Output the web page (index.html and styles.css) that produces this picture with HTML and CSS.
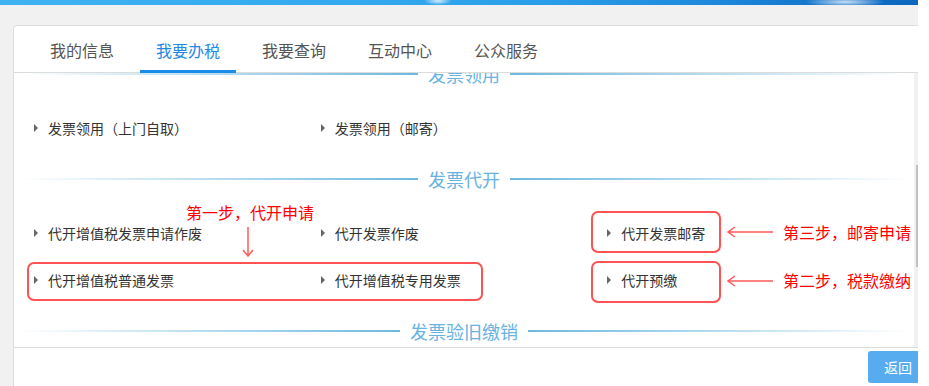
FILE: index.html
```html
<!DOCTYPE html>
<html lang="zh-CN">
<head>
    <meta charset="UTF-8">
    <meta name="viewport" content="width=device-width, initial-scale=1.0">
    <title>我要办税</title>
    <link rel="stylesheet" href="styles.css">
</head>
<body>
    <div class="page">
        <div class="banner"></div>
        <div class="card">
            <ul class="tabs">
                <li>我的信息</li>
                <li class="active">我要办税</li>
                <li>我要查询</li>
                <li>互动中心</li>
                <li>公众服务</li>
            </ul>
            <div class="scroll-row">
                <div class="scroll" id="scrollBox">
                    <div class="scroll-inner">
                        <section class="sec">
                            <h3 class="sec-title"><span>发票票种核定</span></h3>
                            <ul class="items">
                                <li>发票票种核定</li>
                                <li>增值税专用发票最高开票限额申请</li>
                                <li>发票增版增量</li>
                                <li>普通发票核定调整</li>
                                <li>税控设备初始发行</li>
                                <li>税控设备变更发行</li>
                                <li>印制有本单位名称发票</li>
                            </ul>
                        </section>
                        <section class="sec">
                            <h3 class="sec-title"><span>发票领用</span></h3>
                            <ul class="items">
                                <li>发票领用（上门自取）</li>
                                <li>发票领用（邮寄）</li>
                            </ul>
                        </section>
                        <section class="sec">
                            <h3 class="sec-title"><span>发票代开</span></h3>
                            <div class="items-wrap">
                                <ul class="items">
                                    <li>代开增值税发票申请作废</li>
                                    <li>代开发票作废</li>
                                    <li>代开发票邮寄</li>
                                    <li>代开增值税普通发票</li>
                                    <li>代开增值税专用发票</li>
                                    <li>代开预缴</li>
                                </ul>
                                <!-- annotations -->
                                <div class="mark mark-wide"></div>
                                <div class="mark mark-post"></div>
                                <div class="mark mark-pay"></div>
                                <span class="step step-one">第一步，代开申请</span>
                                <svg class="arrow arrow-down" width="12" height="30" viewBox="0 0 12 30">
                                    <path d="M6 0 V29 M1 23 L6 29 L11 23" fill="none" stroke="#ff5b5b" stroke-width="1.5"/>
                                </svg>
                                <svg class="arrow arrow-post" width="46" height="12" viewBox="0 0 46 12">
                                    <path d="M46 6 H1 M8 1 L1 6 L8 11" fill="none" stroke="#ff5b5b" stroke-width="1.5"/>
                                </svg>
                                <span class="step step-three">第三步，邮寄申请</span>
                                <svg class="arrow arrow-pay" width="46" height="12" viewBox="0 0 46 12">
                                    <path d="M46 6 H1 M8 1 L1 6 L8 11" fill="none" stroke="#ff5b5b" stroke-width="1.5"/>
                                </svg>
                                <span class="step step-two">第二步，税款缴纳</span>
                            </div>
                        </section>
                        <section class="sec">
                            <h3 class="sec-title"><span>发票验旧缴销</span></h3>
                            <ul class="items">
                                <li>发票验旧</li>
                                <li>发票缴销</li>
                                <li>发票挂失损毁报告</li>
                                <li>发票真伪查验</li>
                                <li>空白发票作废</li>
                                <li>已开发票作废</li>
                                <li>发票遗失报告</li>
                            </ul>
                        </section>
                    </div>
                </div>
                <div class="scrollbar"><div class="thumb"></div></div>
            </div>
            <div class="footer">
                <button type="button" class="btn-back">返回</button>
            </div>
        </div>
    </div>
    <script>
        document.getElementById('scrollBox').scrollTop = 245;
    </script>
</body>
</html>
```

FILE: styles.css
```css
html, body {
    margin: 0;
    padding: 0;
    height: 386px;
    overflow: hidden;
    background-color: #fff;
    font-family: "Noto Sans CJK SC", "Microsoft YaHei", sans-serif;
}
.page {
    width: 918px;
    height: 386px;
    overflow: hidden;
    background-color: #f1f1f1;
}
.banner {
    height: 5px;
    background:
        radial-gradient(ellipse 14px 4px at 438px 1px, rgba(255, 255, 255, 0.8), rgba(255, 255, 255, 0)),
        radial-gradient(ellipse 40px 5px at 845px 2px, rgba(220, 235, 250, 0.9), rgba(255, 255, 255, 0)),
        linear-gradient(90deg, #3fb2f2 0%, #33a9ee 40%, #2a9de8 60%, #1c86da 80%, #1170c6 92%, #0c66be 100%);
}
.card {
    box-sizing: border-box;
    width: 919px;
    margin: 20px 0 0 13px;
    background-color: #fff;
    border: 1px solid #dcdcdc;
    border-radius: 4px 4px 0 0;
}

/* tabs */
.tabs {
    display: flex;
    gap: 10px;
    list-style: none;
    margin: 0;
    padding: 0 0 0 20px;
    height: 46px;
    border-bottom: 1px solid #dcdcdc;
}
.tabs li {
    box-sizing: border-box;
    height: 47px;
    padding: 4px 16px 0;
    border-bottom: 3px solid transparent;
    font-size: 16px;
    line-height: 40px;
    color: #555;
    cursor: pointer;
}
.tabs li.active {
    color: #2389e4;
    border-bottom-color: #1a8be6;
}

/* scroll area */
.scroll-row {
    display: flex;
    height: 274px;
}
.scroll {
    width: 900px;
    height: 274px;
    overflow: hidden;
}
.scrollbar {
    width: 17px;
    background-color: #f1f1f1;
}
.thumb {
    width: 15px;
    height: 102px;
    margin: 92px 0 0 2px;
    background-color: #c1c1c1;
}
.scroll-inner {
    padding: 31px 20px 50px;
}
.sec-title {
    display: flex;
    align-items: center;
    height: 32px;
    margin: 0 -14px;
    font-size: 18px;
    font-weight: normal;
    line-height: 24px;
    color: #68b3e2;
}
.sec-title::before, .sec-title::after {
    content: "";
    flex: 1;
    height: 2px;
}
.sec-title::before {
    background: linear-gradient(90deg, rgba(108, 185, 224, 0), #6cb9e0);
}
.sec-title::after {
    background: linear-gradient(90deg, #6cb9e0, rgba(108, 185, 224, 0));
}
.sec-title span {
    padding: 0 10px;
}
.items {
    display: grid;
    grid-template-columns: repeat(3, 1fr);
    list-style: none;
    margin: 14px 0 12px;
    padding: 0;
}
.items li {
    display: flex;
    align-items: center;
    height: 47px;
    font-size: 14px;
    line-height: 20px;
    color: #333;
    white-space: nowrap;
    cursor: pointer;
}
.items li::before {
    content: "";
    width: 0;
    height: 0;
    margin-right: 10px;
    border-left: 4px solid #666;
    border-top: 4px solid transparent;
    border-bottom: 4px solid transparent;
}

/* annotations */
.items-wrap {
    position: relative;
    padding: 14px 0 12px;
}
.items-wrap .items {
    margin: 0;
}
.mark {
    position: absolute;
    box-sizing: border-box;
    border: 2px solid #ff5252;
    border-radius: 7px;
}
.mark-wide {
    left: -7px;
    top: 67px;
    width: 456px;
    height: 39px;
}
.mark-post {
    left: 557px;
    top: 16px;
    width: 130px;
    height: 42px;
}
.mark-pay {
    left: 557px;
    top: 66px;
    width: 130px;
    height: 42px;
}
.step {
    position: absolute;
    font-size: 16px;
    line-height: 20px;
    color: #ff0000;
    white-space: nowrap;
}
.step-one {
    left: 152px;
    top: 7px;
}
.step-three {
    left: 749px;
    top: 27px;
}
.step-two {
    left: 749px;
    top: 75px;
}
.arrow {
    position: absolute;
    display: block;
}
.arrow-down {
    left: 208px;
    top: 32px;
}
.arrow-post {
    left: 693px;
    top: 31px;
}
.arrow-pay {
    left: 693px;
    top: 80px;
}

/* footer */
.footer {
    display: flex;
    justify-content: flex-end;
    height: 60px;
    padding: 3px 3px 0 0;
    border-top: 1px solid #dcdcdc;
}
.btn-back {
    width: 60px;
    height: 32px;
    padding: 0;
    border: none;
    border-radius: 3px;
    background-color: #57acf0;
    color: #fff;
    font-family: inherit;
    font-size: 14px;
    cursor: pointer;
}
```
